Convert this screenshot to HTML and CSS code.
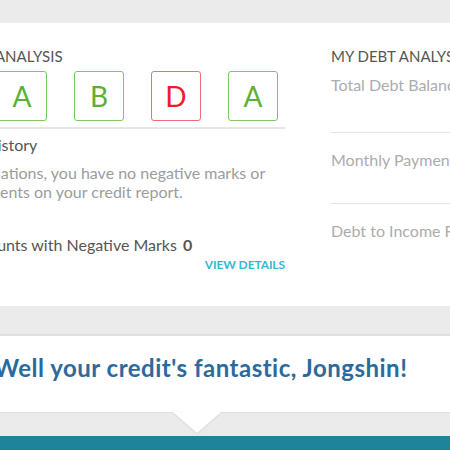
FILE: index.html
```html
<!DOCTYPE html>
<html>
<head>
<meta charset="utf-8">
<link rel="stylesheet" href="styles.css">
</head>
<body>
<div class="page">
  <div class="band-top"></div>
  <section class="card">
    <div class="col-left">
      <h2 class="heading heading-left">MY CREDIT ANALYSIS</h2>
      <div class="grades">
        <div class="grade good">F</div>
        <div class="grade good">A</div>
        <div class="grade good">B</div>
        <div class="grade bad">D</div>
        <div class="grade good">A</div>
      </div>
      <div class="rule"></div>
      <div class="factor-title">Payment History</div>
      <p class="factor-text">Congratulations, you have no negative marks or late payments on your credit report.</p>
      <div class="factor-stat">Total Accounts with Negative Marks <b>0</b></div>
      <div class="details-row"><a class="details">VIEW DETAILS</a></div>
    </div>
    <div class="col-right">
      <h2 class="heading">MY DEBT ANALYSIS</h2>
      <div class="debt-row first">Total Debt Balance</div>
      <div class="debt-row">Monthly Payment</div>
      <div class="debt-row last">Debt to Income Ratio</div>
    </div>
  </section>
  <div class="band-gap"></div>
  <div class="message"><h1>Well your credit's fantastic, Jongshin!</h1></div>
  <div class="band-pointer"><div class="pointer"></div></div>
  <div class="band-teal"></div>
</div>
</body>
</html>
```
FILE: styles.css
```css
html, body {
  margin: 0;
  padding: 0;
  background: #ebebeb;
}
body {
  width: 450px;
  height: 450px;
  overflow: hidden;
  font-family: Lato, "Open Sans", sans-serif;
}
.page {
  width: 450px;
  overflow: hidden;
}
.band-top {
  height: 23px;
  background: #ebebeb;
}
.card {
  height: 283px;
  background: #fff;
  display: flex;
  box-sizing: border-box;
  padding-top: 23px;
}
.col-left {
  flex: none;
  width: 365px;
  margin-left: -80px;
}
.col-right {
  flex: none;
  width: 360px;
  margin-left: 46px;
}
.heading {
  margin: 0;
  font-size: 15px;
  line-height: 20px;
  font-weight: 400;
  color: #555;
  white-space: nowrap;
}
.heading-left {
  margin-left: -7px;
}
.grades {
  display: flex;
  gap: 27px;
  margin-top: 5px;
}
.grade {
  width: 50px;
  height: 50px;
  box-sizing: border-box;
  border: 1.5px solid #7ec760;
  border-radius: 3px;
  display: flex;
  align-items: center;
  justify-content: center;
  font-size: 28px;
  color: #5bb133;
}
.grade.bad {
  border-color: #f36b74;
  color: #ee1c2b;
}
.rule {
  height: 2px;
  background: #e6e6e6;
  margin-top: 6px;
}
.factor-title {
  margin-top: 6px;
  font-size: 16px;
  line-height: 20px;
  color: #555;
}
.factor-text {
  margin: 8px 0 0 12px;
  max-width: 335px;
  font-size: 16px;
  line-height: 19px;
  color: #9c9c9c;
}
.factor-stat {
  margin: 34px 0 0 5px;
  font-size: 16px;
  line-height: 20px;
  color: #555;
}
.factor-stat b {
  margin-left: 2px;
}
.details-row {
  text-align: right;
  line-height: 16px;
}
.details {
  font-size: 12px;
  font-weight: 700;
  color: #33b8d6;
  letter-spacing: -0.1px;
}
.debt-row {
  font-size: 16px;
  line-height: 20px;
  color: #acacac;
  white-space: nowrap;
  padding: 17px 0 33px;
  border-bottom: 1.5px solid #e6e6e6;
}
.debt-row.first {
  padding-top: 9px;
  padding-bottom: 37px;
}
.debt-row.last {
  border-bottom: none;
}
.band-gap {
  height: 28px;
  background: #ebebeb;
  border-bottom: 2px solid #e0e0e0;
}
.message {
  height: 76px;
  box-sizing: border-box;
  padding-top: 17px;
  background: #fff;
}
.message h1 {
  margin: 0 0 0 -6px;
  font-size: 24px;
  line-height: 30px;
  letter-spacing: 0.5px;
  font-weight: 700;
  color: #2c6a9c;
  white-space: nowrap;
}
.band-pointer {
  position: relative;
  height: 24px;
  background: #ebebeb;
  border-top: 1px solid #e0e0e0;
  box-sizing: border-box;
}
.pointer {
  position: absolute;
  left: 173px;
  top: -1px;
  width: 0;
  height: 0;
  border-left: 24px solid transparent;
  border-right: 24px solid transparent;
  border-top: 21px solid #fff;
  filter: drop-shadow(0 1px 1px rgba(0,0,0,0.08));
}
.band-teal {
  height: 20px;
  background: #1f8499;
}
```
